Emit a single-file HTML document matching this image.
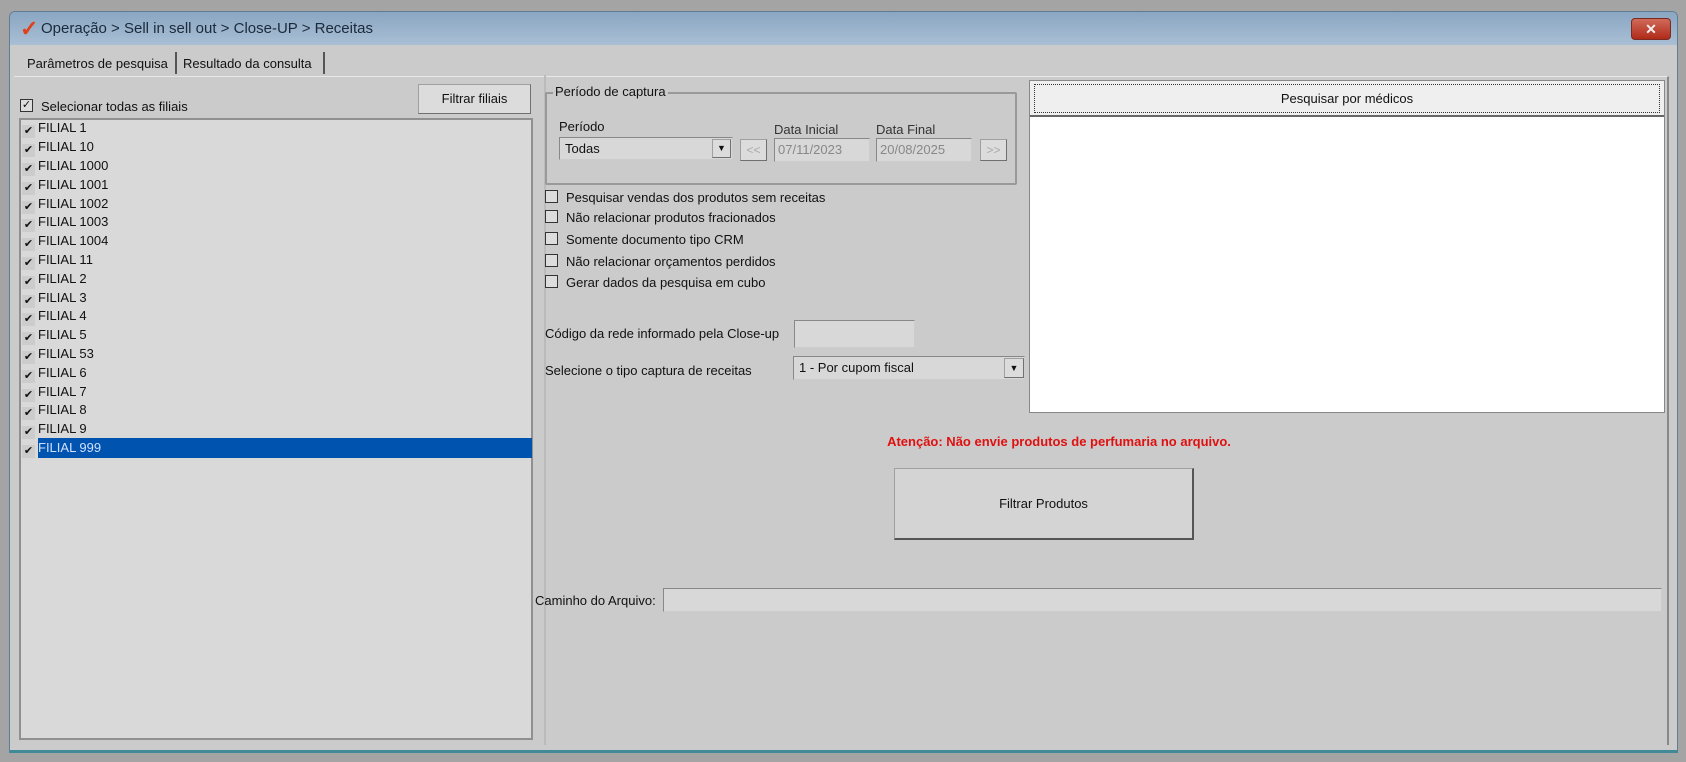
<!DOCTYPE html>
<html><head><meta charset="utf-8"><style>
*{box-sizing:border-box;margin:0;padding:0}
body{width:1686px;height:762px;background:#a4a4a4;font-family:"Liberation Sans",sans-serif;font-size:13px;color:#111;position:relative;overflow:hidden}
.a{position:absolute}
.win{left:9px;top:11px;width:1669px;height:742px;background:#cbcbcb;border:1px solid #5f7d95;border-radius:6px 6px 0 0;border-bottom:3px solid #3f8a96}
.title{left:10px;top:12px;width:1667px;height:33px;background:linear-gradient(#8aa6c2,#a9bfd4);border-radius:5px 5px 0 0}
.btn{background:#dcdcdc;border:1px solid #a0a0a0;border-right-color:#707070;border-bottom-color:#707070;text-align:center}
.cb{width:13px;height:13px;border:1px solid #333;background:#ddd}
.row{left:22px;height:19px;line-height:19px;font-size:13px}
.row i{display:inline-block;width:13px;height:13px;background:#ccc;vertical-align:-2px;margin-right:3px;font-style:normal;font-size:11px;line-height:13px;text-align:center}
.tb{background:#d8d8d8;border:1px solid #888;border-right-color:#ccc;border-bottom-color:#ccc}
</style></head><body>
<div class="a win"></div>
<div class="a title"></div>
<div class="a" style="left:20px;top:18px;color:#e0401a;font-size:22px;font-weight:bold;line-height:22px">✓</div>
<div class="a" style="left:41px;top:20px;font-size:15px;color:#1a2a3a">Operação &gt; Sell in sell out &gt; Close-UP &gt; Receitas</div>
<div class="a" style="left:1631px;top:18px;width:40px;height:22px;background:linear-gradient(#d06a5a,#b02a18);border:1px solid #7a2a20;border-radius:4px;color:#eee;text-align:center;font-weight:bold;font-size:14px;line-height:20px">✕</div>
<div class="a" style="left:27px;top:56px;font-size:13px">Parâmetros de pesquisa</div>
<div class="a" style="left:175px;top:52px;width:2px;height:22px;background:#555"></div>
<div class="a" style="left:183px;top:56px;font-size:13px">Resultado da consulta</div>
<div class="a" style="left:323px;top:52px;width:2px;height:22px;background:#555"></div>
<div class="a" style="left:14px;top:76px;width:1655px;height:669px;border-top:1px solid #e8e8e8;border-right:2px solid #888"></div>
<div class="a btn" style="left:418px;top:84px;width:113px;height:30px;line-height:28px;font-size:13px">Filtrar filiais</div>
<div class="a cb" style="left:20px;top:99px;line-height:11px;font-size:11px;text-align:center">✓</div>
<div class="a" style="left:41px;top:99px;font-size:13px">Selecionar todas as filiais</div>
<div class="a" style="left:19px;top:118px;width:514px;height:622px;background:#d9d9d9;border:2px solid #909090"></div>
<div class="a" style="left:38px;top:438px;width:494px;height:20px;background:#0054b0"></div>
<div class="a row" style="top:118px"><i>✔</i>FILIAL 1</div>
<div class="a row" style="top:137px"><i>✔</i>FILIAL 10</div>
<div class="a row" style="top:156px"><i>✔</i>FILIAL 1000</div>
<div class="a row" style="top:175px"><i>✔</i>FILIAL 1001</div>
<div class="a row" style="top:194px"><i>✔</i>FILIAL 1002</div>
<div class="a row" style="top:212px"><i>✔</i>FILIAL 1003</div>
<div class="a row" style="top:231px"><i>✔</i>FILIAL 1004</div>
<div class="a row" style="top:250px"><i>✔</i>FILIAL 11</div>
<div class="a row" style="top:269px"><i>✔</i>FILIAL 2</div>
<div class="a row" style="top:288px"><i>✔</i>FILIAL 3</div>
<div class="a row" style="top:306px"><i>✔</i>FILIAL 4</div>
<div class="a row" style="top:325px"><i>✔</i>FILIAL 5</div>
<div class="a row" style="top:344px"><i>✔</i>FILIAL 53</div>
<div class="a row" style="top:363px"><i>✔</i>FILIAL 6</div>
<div class="a row" style="top:382px"><i>✔</i>FILIAL 7</div>
<div class="a row" style="top:400px"><i>✔</i>FILIAL 8</div>
<div class="a row" style="top:419px"><i>✔</i>FILIAL 9</div>
<div class="a row" style="top:438px;color:#cfe0ff"><i style="color:#111">✔</i>FILIAL 999</div>
<div class="a" style="left:544px;top:75px;width:2px;height:670px;background:#bbb"></div>
<div class="a" style="left:545px;top:92px;width:472px;height:93px;border:2px solid #999;border-radius:2px"></div>
<div class="a" style="left:553px;top:84px;background:#cbcbcb;padding:0 2px;font-size:13px">Período de captura</div>
<div class="a" style="left:559px;top:119px;font-size:13px">Período</div>
<div class="a tb" style="left:559px;top:137px;width:174px;height:23px;padding:3px 5px;font-size:13px">Todas</div>
<div class="a btn" style="left:712px;top:139px;width:19px;height:19px;font-size:9px;line-height:17px">▼</div>
<div class="a btn" style="left:740px;top:139px;width:27px;height:22px;color:#aaa;font-size:12px;line-height:20px">&lt;&lt;</div>
<div class="a" style="left:774px;top:122px;font-size:13px;color:#333">Data Inicial</div>
<div class="a tb" style="left:774px;top:138px;width:96px;height:24px;padding:3px 3px;color:#888;font-size:13px">07/11/2023</div>
<div class="a" style="left:876px;top:122px;font-size:13px;color:#333">Data Final</div>
<div class="a tb" style="left:876px;top:138px;width:96px;height:24px;padding:3px 3px;color:#888;font-size:13px">20/08/2025</div>
<div class="a btn" style="left:980px;top:139px;width:27px;height:22px;color:#aaa;font-size:12px;line-height:20px">&gt;&gt;</div>
<div class="a cb" style="left:545px;top:190px"></div><div class="a" style="left:566px;top:190px">Pesquisar vendas dos produtos sem receitas</div>
<div class="a cb" style="left:545px;top:210px"></div><div class="a" style="left:566px;top:210px">Não relacionar produtos fracionados</div>
<div class="a cb" style="left:545px;top:232px"></div><div class="a" style="left:566px;top:232px">Somente documento tipo CRM</div>
<div class="a cb" style="left:545px;top:254px"></div><div class="a" style="left:566px;top:254px">Não relacionar orçamentos perdidos</div>
<div class="a cb" style="left:545px;top:275px"></div><div class="a" style="left:566px;top:275px">Gerar dados da pesquisa em cubo</div>
<div class="a" style="left:545px;top:326px">Código da rede informado pela Close-up</div>
<div class="a tb" style="left:794px;top:320px;width:121px;height:28px"></div>
<div class="a" style="left:545px;top:363px">Selecione o tipo captura de receitas</div>
<div class="a tb" style="left:793px;top:356px;width:232px;height:24px;padding:3px 5px">1 - Por cupom fiscal</div>
<div class="a btn" style="left:1004px;top:358px;width:20px;height:20px;font-size:9px;line-height:18px">▼</div>
<div class="a" style="left:1029px;top:80px;width:636px;height:333px;background:#fff;border:1px solid #888"></div>
<div class="a" style="left:1030px;top:81px;width:634px;height:36px;background:#efefef;border-bottom:2px solid #666"></div>
<div class="a" style="left:1034px;top:84px;width:626px;height:29px;border:1px dotted #333;text-align:center;line-height:27px;font-size:13px">Pesquisar por médicos</div>
<div class="a" style="left:0;width:2118px;top:434px;text-align:center;color:#e01010;font-weight:bold;font-size:13px">Atenção: Não envie produtos de perfumaria no arquivo.</div>
<div class="a btn" style="left:894px;top:468px;width:300px;height:72px;line-height:70px;font-size:13px;border-right:2px solid #555;border-bottom:2px solid #555;background:#d4d4d4">Filtrar Produtos</div>
<div class="a" style="left:535px;top:593px;font-size:13px">Caminho do Arquivo:</div>
<div class="a tb" style="left:663px;top:588px;width:999px;height:24px"></div>
</body></html>
